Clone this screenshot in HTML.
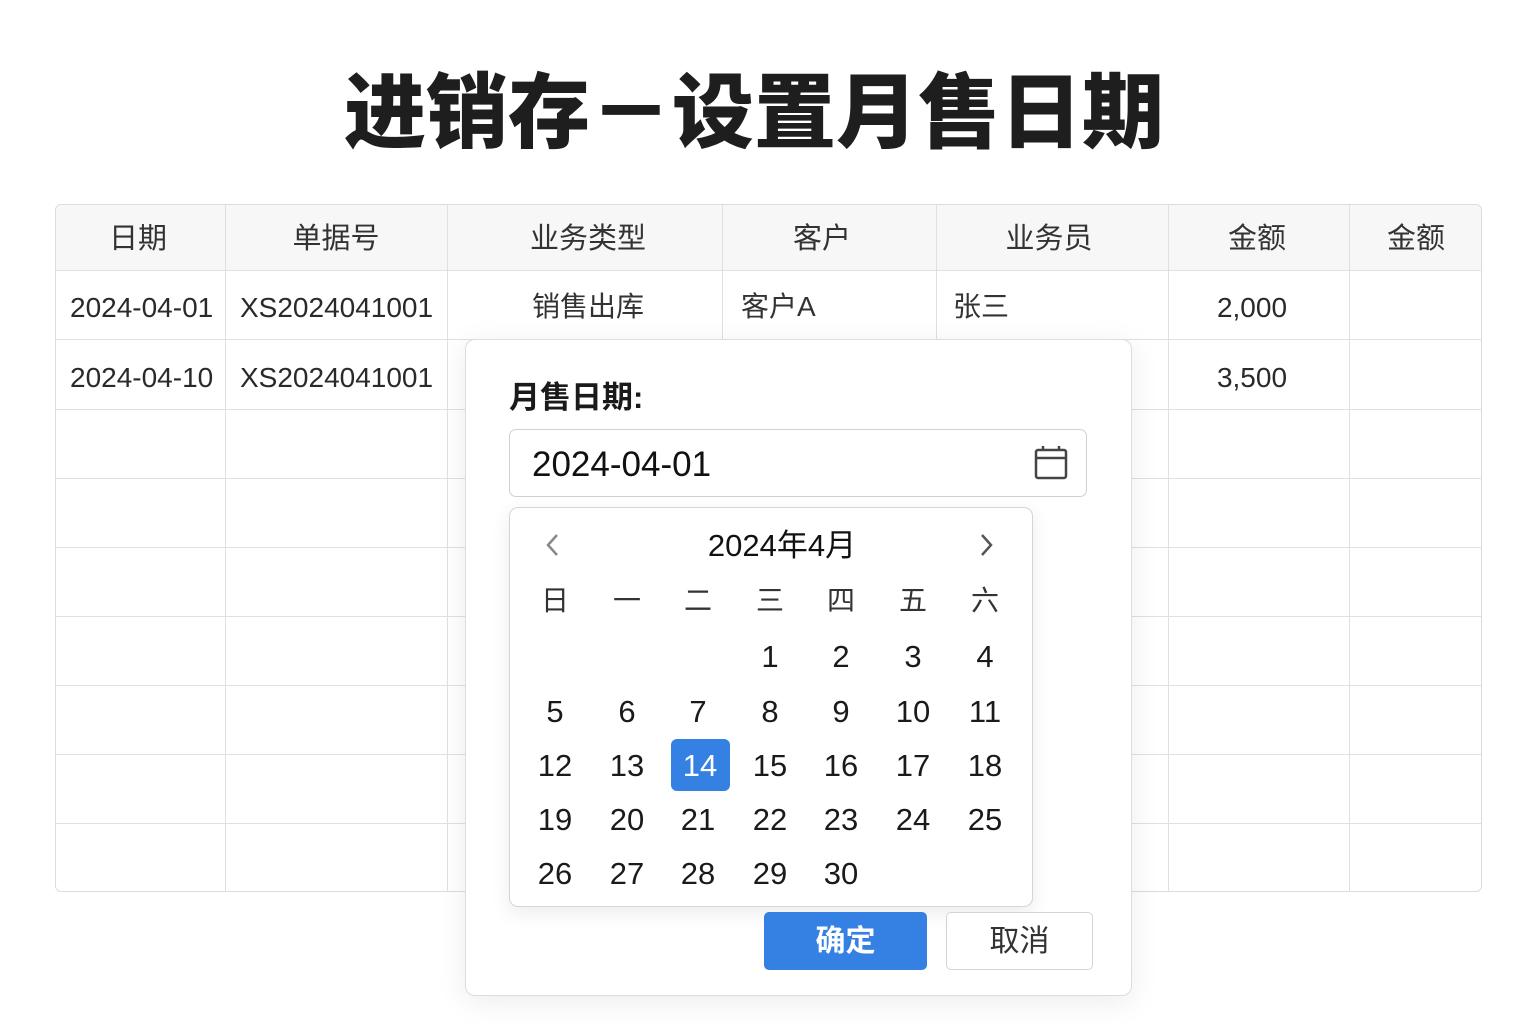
<!DOCTYPE html>
<html><head><meta charset="utf-8"><style>
*{margin:0;padding:0;box-sizing:border-box}
body{width:1536px;height:1024px;background:#fff;position:relative;overflow:hidden;font-family:"Liberation Sans","Noto Sans CJK SC",sans-serif;color:#222}
.a{position:absolute}
.title{left:0;width:1508px;top:62px;text-align:center;font-size:82px;font-weight:900;color:#1e1e1e;letter-spacing:0;line-height:104px}
.tbl{left:55px;top:204px;width:1427px;height:688px;border:1px solid #dcdcdc;border-radius:6px;overflow:hidden}
.hl{position:absolute;left:0;width:100%;height:1px;background:#e0e0e0}
.vl{position:absolute;top:0;height:100%;width:1px;background:#e0e0e0}
.t{position:absolute;font-size:28px;color:#2a2a2a;line-height:36px;white-space:nowrap}
.th{color:#333;font-size:29px}
.dlg{left:465px;top:339px;width:667px;height:657px;background:#fff;border:1px solid #ddd;border-radius:10px;box-shadow:0 6px 30px rgba(0,0,0,.08)}
.cal{left:509px;top:507px;width:524px;height:400px;border:1px solid #d5d5d5;border-radius:9px;background:#fff;box-shadow:0 6px 20px rgba(0,0,0,.08)}
.d{position:absolute;width:60px;height:50px;line-height:50px;text-align:center;font-size:31px;color:#1a1a1a}
.w{font-size:28px;color:#333}
</style></head><body>
<div class="a title">进销存－设置月售日期</div>
<div class="a tbl">
 <div style="position:absolute;left:0;top:0;width:100%;height:66px;background:#f7f7f7"></div>
 <div class="hl" style="top:65px"></div><div class="hl" style="top:134px"></div><div class="hl" style="top:204px"></div><div class="hl" style="top:273px"></div><div class="hl" style="top:342px"></div><div class="hl" style="top:411px"></div><div class="hl" style="top:480px"></div><div class="hl" style="top:549px"></div><div class="hl" style="top:618px"></div>
 <div class="vl" style="left:169px"></div><div class="vl" style="left:391px"></div><div class="vl" style="left:666px"></div><div class="vl" style="left:880px"></div><div class="vl" style="left:1112px"></div><div class="vl" style="left:1293px"></div>
</div>
<div class="t th" style="left:55px;width:166px;top:221px;text-align:center">日期</div>
<div class="t th" style="left:225px;width:222px;top:221px;text-align:center">单据号</div>
<div class="t th" style="left:447px;width:282px;top:221px;text-align:center">业务类型</div>
<div class="t th" style="left:722px;width:200px;top:221px;text-align:center">客户</div>
<div class="t th" style="left:936px;width:226px;top:221px;text-align:center">业务员</div>
<div class="t th" style="left:1168px;width:178px;top:221px;text-align:center">金额</div>
<div class="t th" style="left:1349px;width:134px;top:221px;text-align:center">金额</div>
<div class="t" style="left:70px;top:290px">2024-04-01</div>
<div class="t" style="left:240px;top:290px">XS2024041001</div>
<div class="t" style="left:447px;width:282px;top:289px;text-align:center;color:#333">销售出库</div>
<div class="t" style="left:741px;top:289px;color:#333">客户A</div>
<div class="t" style="left:953px;top:289px;color:#333">张三</div>
<div class="t" style="left:1168px;width:168px;top:290px;text-align:center">2,000</div>
<div class="t" style="left:70px;top:360px">2024-04-10</div>
<div class="t" style="left:240px;top:360px">XS2024041001</div>
<div class="t" style="left:1168px;width:168px;top:360px;text-align:center">3,500</div>

<div class="a dlg"></div>
<div class="a" style="left:509px;top:377px;font-size:31px;font-weight:700;color:#1a1a1a;line-height:42px">月售日期:</div>
<div class="a" style="left:509px;top:429px;width:578px;height:68px;border:1px solid #d0d0d0;border-radius:7px"></div>
<div class="a" style="left:532px;top:445px;font-size:35px;color:#111;line-height:40px">2024-04-01</div>
<svg class="a" style="left:1033px;top:445px" width="36" height="36" viewBox="0 0 36 36"><rect x="3" y="5" width="30" height="28" rx="2" fill="none" stroke="#444" stroke-width="2.5"/><line x1="3" y1="13" x2="33" y2="13" stroke="#444" stroke-width="2.5"/><line x1="10" y1="1" x2="10" y2="6" stroke="#444" stroke-width="2.5"/><line x1="26" y1="1" x2="26" y2="6" stroke="#444" stroke-width="2.5"/></svg>

<div class="a cal"></div>
<svg class="a" style="left:543px;top:532px" width="20" height="26" viewBox="0 0 20 26"><path d="M14 3 L5 13 L14 23" fill="none" stroke="#888" stroke-width="2.5"/></svg>
<svg class="a" style="left:977px;top:532px" width="20" height="26" viewBox="0 0 20 26"><path d="M5 3 L14 13 L5 23" fill="none" stroke="#555" stroke-width="2.5"/></svg>
<div class="a" style="left:509px;width:546px;top:526px;text-align:center;font-size:31px;color:#111;line-height:40px">2024年4月</div>

<div class="d w" style="left:525px;top:576px">日</div><div class="d w" style="left:597px;top:576px">一</div><div class="d w" style="left:668px;top:576px">二</div><div class="d w" style="left:740px;top:576px">三</div><div class="d w" style="left:811px;top:576px">四</div><div class="d w" style="left:883px;top:576px">五</div><div class="d w" style="left:955px;top:576px">六</div>

<div class="d" style="left:740px;top:632px">1</div><div class="d" style="left:811px;top:632px">2</div><div class="d" style="left:883px;top:632px">3</div><div class="d" style="left:955px;top:632px">4</div>
<div class="d" style="left:525px;top:687px">5</div><div class="d" style="left:597px;top:687px">6</div><div class="d" style="left:668px;top:687px">7</div><div class="d" style="left:740px;top:687px">8</div><div class="d" style="left:811px;top:687px">9</div><div class="d" style="left:883px;top:687px">10</div><div class="d" style="left:955px;top:687px">11</div>
<div class="a" style="left:671px;top:739px;width:59px;height:52px;background:#3480e3;border-radius:6px"></div>
<div class="d" style="left:525px;top:741px">12</div><div class="d" style="left:597px;top:741px">13</div><div class="d" style="left:670px;top:741px;color:#fff">14</div><div class="d" style="left:740px;top:741px">15</div><div class="d" style="left:811px;top:741px">16</div><div class="d" style="left:883px;top:741px">17</div><div class="d" style="left:955px;top:741px">18</div>
<div class="d" style="left:525px;top:795px">19</div><div class="d" style="left:597px;top:795px">20</div><div class="d" style="left:668px;top:795px">21</div><div class="d" style="left:740px;top:795px">22</div><div class="d" style="left:811px;top:795px">23</div><div class="d" style="left:883px;top:795px">24</div><div class="d" style="left:955px;top:795px">25</div>
<div class="d" style="left:525px;top:849px">26</div><div class="d" style="left:597px;top:849px">27</div><div class="d" style="left:668px;top:849px">28</div><div class="d" style="left:740px;top:849px">29</div><div class="d" style="left:811px;top:849px">30</div>

<div class="a" style="left:764px;top:912px;width:163px;height:58px;background:#3480e3;border-radius:5px;color:#fff;font-size:30px;font-weight:700;text-align:center;line-height:60px">确定</div>
<div class="a" style="left:946px;top:912px;width:147px;height:58px;background:#fff;border:1px solid #d5d5d5;border-radius:5px;color:#333;font-size:30px;text-align:center;line-height:58px">取消</div>
</body></html>
